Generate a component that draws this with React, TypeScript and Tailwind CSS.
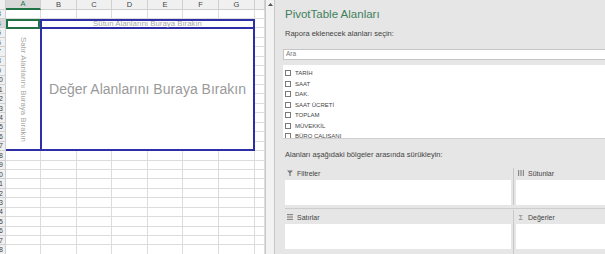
const COLS = ["A", "B", "C", "D", "E", "F", "G", ""];
const ROWS = Array.from({ length: 26 }, (_, i) => i + 3);
const FIELDS = ["TARİH", "SAAT", "DAK.", "SAAT ÜCRETİ", "TOPLAM", "MÜVEKKİL", "BÜRO ÇALIŞANI"];

function Sheet() {
  return (
    <div className="relative h-full w-[265px] shrink-0 overflow-hidden bg-white">
      <div className="grid grid-cols-[6px_35px_36px_35px_36px_35px_36px_36px_10px] grid-rows-[9.5px_repeat(26,9.45px)]">
        <div className="border-b border-r border-[#cfcfcf] bg-[#f0f0f0]" />
        {COLS.map((c, i) =>
          i === 0 ? (
            <div
              key={c}
              className="flex items-center justify-center border-b-2 border-r border-r-[#cfcfcf] border-b-[#217346] bg-[#d8d8d8] text-[7.5px] leading-none text-[#217346]"
            >
              {c}
            </div>
          ) : (
            <div
              key={i}
              className="flex items-center justify-center border-b border-r border-[#cfcfcf] bg-[#f0f0f0] text-[7.5px] leading-none text-[#444]"
            >
              {c}
            </div>
          )
        )}
        {ROWS.map((r) => (
          <Row key={r} n={r} />
        ))}
      </div>

      {/* pivot drop zones drawn over the cells */}
      <div className="absolute left-[6px] top-[19px] flex h-[132.3px] w-[249px] flex-col bg-white">
        <div className="flex h-[10px]">
          <div className="w-[34px] border-2 border-[#217346] bg-white" />
          <div className="flex flex-1 items-center justify-center border-2 border-[#2e2ea6] text-[7.8px] leading-none text-[#a6a6a6]">
            Sütun Alanlarını Buraya Bırakın
          </div>
        </div>
        <div className="flex flex-1">
          <div className="flex w-[34px] items-center justify-center border-b-2 border-[#2e2ea6]">
            <span className="text-[7.8px] leading-none text-[#a6a6a6] [writing-mode:vertical-rl]">
              Satır Alanlarını Buraya Bırakın
            </span>
          </div>
          <div className="flex flex-1 items-center justify-center border-x-2 border-b-2 border-[#2e2ea6] text-[14px] text-[#9a9a9a]">
            Değer Alanlarını Buraya Bırakın
          </div>
        </div>
      </div>
    </div>
  );
}

function Row({ n }: { n: number }) {
  return (
    <>
      {/* row numbers: the header is cut at the window edge, only the last digit shows */}
      <div
        className={`flex items-center overflow-hidden border-b border-r border-[#cfcfcf] ${
          n === 4 ? "bg-[#d8d8d8]" : "bg-[#f0f0f0]"
        }`}
      >
        <span className="-ml-[7px] w-[12px] shrink-0 text-center text-[7px] leading-none text-[#444]">{n}</span>
      </div>
      {COLS.map((_, i) => (
        <div key={i} className="border-b border-r border-[#dcdcdc]" />
      ))}
    </>
  );
}

function Scrollbar() {
  return (
    <div className="flex h-full w-[10px] shrink-0 flex-col border-x border-[#c8c8c8] bg-[#f2f2f2]">
      <div className="flex h-[9px] items-center justify-center">
        <svg width="5" height="3" viewBox="0 0 5 3">
          <path d="M0 3 L2.5 0 L5 3 Z" fill="#555" />
        </svg>
      </div>
    </div>
  );
}

function AreaIcon({ kind }: { kind: string }) {
  if (kind === "filter")
    return (
      <svg width="6" height="6" viewBox="0 0 6 6">
        <path d="M0 0.5 H6 L3.6 3 V6 H2.4 V3 Z" fill="#777" />
      </svg>
    );
  if (kind === "cols")
    return (
      <svg width="6" height="6" viewBox="0 0 6 6">
        <rect x="0" y="0" width="1.2" height="6" fill="#888" />
        <rect x="2.4" y="0" width="1.2" height="6" fill="#888" />
        <rect x="4.8" y="0" width="1.2" height="6" fill="#888" />
      </svg>
    );
  if (kind === "rows")
    return (
      <svg width="6" height="6" viewBox="0 0 6 6">
        <rect x="0" y="0" width="6" height="1.2" fill="#888" />
        <rect x="0" y="2.4" width="6" height="1.2" fill="#888" />
        <rect x="0" y="4.8" width="6" height="1.2" fill="#888" />
      </svg>
    );
  return <span className="text-[7px] leading-none text-[#777]">Σ</span>;
}

function Area({ kind, label }: { kind: string; label: string }) {
  return (
    <div className="flex flex-col">
      <div className="flex h-[14px] items-center">
        <span className="flex w-[12px] justify-center pr-[2px]">
          <AreaIcon kind={kind} />
        </span>
        <span className="text-[7px] leading-none text-[#444]">{label}</span>
      </div>
      <div className="h-[25px] bg-white" />
    </div>
  );
}

function PivotPane() {
  return (
    <div className="h-full flex-1 overflow-hidden bg-[#e6e6e6] pl-[8px]">
      <div className="w-[340px]">
        <div className="h-[22px] pl-[2px] pt-[6px] text-[11.5px] leading-[16px] text-[#3f7f5c]">
          PivotTable Alanları
        </div>
        <div className="mt-[7px] h-[10px] pl-[2px] text-[7.5px] leading-[10px] text-[#444]">
          Rapora eklenecek alanları seçin:
        </div>
        <div className="mt-[10px] flex h-[11px] items-center border border-[#c6c6c6] bg-white pl-[2px] text-[6.5px] leading-none text-[#777]">
          Ara
        </div>
        <div className="mt-[5px] h-[74px] overflow-hidden border-b border-[#d0d0d0] bg-white pl-[2px] pt-[3px]">
          {FIELDS.map((f) => (
            <div key={f} className="flex h-[10.5px] items-center gap-[4px]">
              <span className="h-[6px] w-[6px] border border-[#7a7a7a] bg-white" />
              <span className="text-[6px] leading-none text-[#444]">{f}</span>
            </div>
          ))}
        </div>
        <div className="mt-[11px] h-[10px] pl-[2px] text-[7.5px] leading-[10px] text-[#444]">
          Alanları aşağıdaki bölgeler arasında sürükleyin:
        </div>
        <div className="mt-[6px] pl-[2px]">
          <div className="flex border-b border-[#cdcdcd] pb-[3px]">
            <div className="w-[226px]">
              <Area kind="filter" label="Filtreler" />
            </div>
            <div className="flex w-[5px] justify-center pt-[2px]">
              <div className="w-px bg-[#c8c8c8]" />
            </div>
            <div className="flex-1">
              <Area kind="cols" label="Sütunlar" />
            </div>
          </div>
          <div className="flex pt-[1px]">
            <div className="w-[226px]">
              <Area kind="rows" label="Satırlar" />
            </div>
            <div className="flex w-[5px] justify-center">
              <div className="h-[50px] w-px bg-[#c8c8c8]" />
            </div>
            <div className="flex-1">
              <Area kind="sum" label="Değerler" />
            </div>
          </div>
        </div>
      </div>
    </div>
  );
}

export default function App() {
  return (
    <div className="flex h-[254px] w-[605px] overflow-hidden bg-white font-['Liberation_Sans',Arial,sans-serif]">
      <Sheet />
      <Scrollbar />
      <PivotPane />
    </div>
  );
}
